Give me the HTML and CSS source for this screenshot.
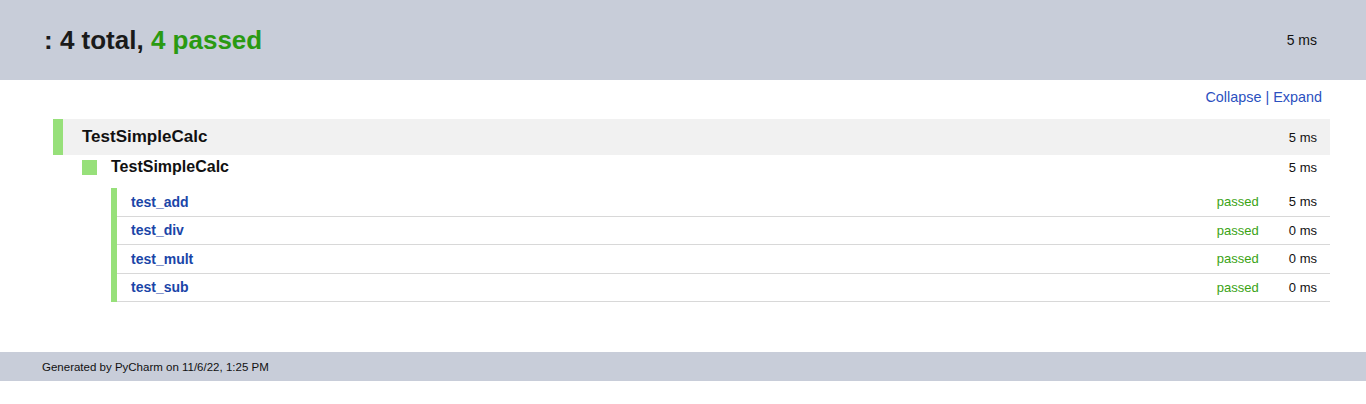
FILE: index.html
```html
<!DOCTYPE html>
<html>
<head>
<meta charset="utf-8">
<link rel="stylesheet" href="styles.css">
</head>
<body>
<header class="hdr">
  <h1 class="title">: 4 total, <span class="ok">4 passed</span></h1>
  <div class="hdr-time">5 ms</div>
</header>
<main class="content">
  <div class="toolbar"><a class="lnk">Collapse</a> | <a class="lnk">Expand</a></div>
  <div class="suite">
    <div class="bar"></div>
    <div class="suite-name">TestSimpleCalc</div>
    <div class="time">5 ms</div>
  </div>
  <div class="subsuite">
    <div class="sq"></div>
    <div class="sub-name">TestSimpleCalc</div>
    <div class="time">5 ms</div>
  </div>
  <div class="tests">
    <div class="test"><span class="tname">test_add</span><span class="status">passed</span><span class="ttime">5 ms</span></div>
    <div class="test"><span class="tname">test_div</span><span class="status">passed</span><span class="ttime">0 ms</span></div>
    <div class="test"><span class="tname">test_mult</span><span class="status">passed</span><span class="ttime">0 ms</span></div>
    <div class="test"><span class="tname">test_sub</span><span class="status">passed</span><span class="ttime">0 ms</span></div>
  </div>
</main>
<footer class="ftr">Generated by PyCharm on 11/6/22, 1:25 PM</footer>
</body>
</html>
```
FILE: styles.css
```css
html, body { margin: 0; padding: 0; background: #fff; }
body { font-family: "Liberation Sans", Arial, sans-serif; color: #111; }
.hdr {
  height: 80px; background: #c8cdd9; display: flex; align-items: center;
  justify-content: space-between; padding: 0 49px 0 44px; box-sizing: border-box;
}
.title { margin: 0; font-size: 26px; font-weight: bold; color: #1a1a1a; }
.ok { color: #2a9a12; }
.hdr-time { font-size: 14px; color: #111; }
.content { padding: 0 36px 0 53px; height: 272px; box-sizing: border-box; }
.toolbar { text-align: right; font-size: 14.4px; color: #2b50c0; padding: 9px 8px 0 0; height: 30px; box-sizing: border-box; }
.lnk { color: #2b50c0; }
.suite { display: flex; align-items: center; height: 36px; background: #f1f1f1; margin-top: 9px; }
.bar { width: 10px; align-self: stretch; background: #97e07a; }
.suite-name { flex: 1; font-size: 17px; font-weight: bold; padding-left: 19px; }
.time { font-size: 13px; padding-right: 13px; }
.subsuite { display: flex; align-items: center; height: 24px; margin-bottom: 9px; padding-left: 29px; }
.sq { width: 15px; height: 15px; background: #97e07a; }
.sub-name { flex: 1; font-size: 16px; font-weight: bold; padding-left: 14px; }
.tests { margin-left: 58px; border-left: 6px solid #97e07a; }
.test {
  display: flex; align-items: center; height: 28.5px; box-sizing: border-box;
  border-bottom: 1px solid #d8d8d8; font-size: 13px;
}
.tname { flex: 1; font-weight: bold; color: #1a45a8; padding-left: 14px; font-size: 14px; }
.status { color: #3aa314; width: 72px; }
.ttime { padding-right: 13px; }
.ftr {
  height: 29px; background: #c8cdd9; font-size: 11.5px; color: #111;
  display: flex; align-items: center; padding-left: 42px; box-sizing: border-box;
}
```
